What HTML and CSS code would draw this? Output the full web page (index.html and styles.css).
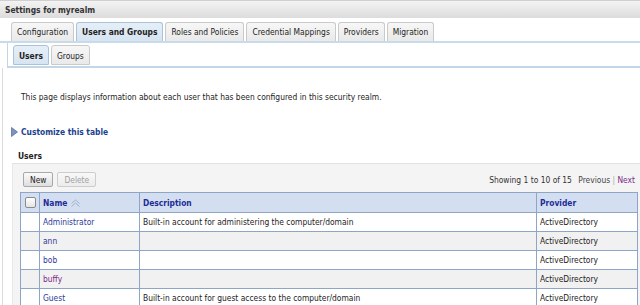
FILE: index.html
```html
<!DOCTYPE html>
<html lang="en">
<head>
    <meta charset="UTF-8">
    <title>Settings for myrealm</title>
    <link rel="stylesheet" href="styles.css">
</head>
<body>
    <div class="titlebar">Settings for myrealm</div>
    <div class="tabs">
        <a class="tab">Configuration</a>
        <a class="tab active">Users and Groups</a>
        <a class="tab">Roles and Policies</a>
        <a class="tab">Credential Mappings</a>
        <a class="tab">Providers</a>
        <a class="tab">Migration</a>
    </div>
    <div class="tabpanel">
        <div class="subtabs">
            <a class="subtab active">Users</a>
            <a class="subtab">Groups</a>
        </div>
    </div>
    <div class="page">
        <p class="intro">This page displays information about each user that has been configured in this security realm.</p>
        <a class="customize">
            <svg width="7" height="10" viewBox="0 0 7 10"><path d="M0.5 0.5 L6.5 5 L0.5 9.5 Z" fill="#7d93bd" stroke="#5b74a8" stroke-width="0.8"/></svg>
            Customize this table
        </a>
        <h3 class="section">Users</h3>
        <div class="tablebox">
            <div class="toolbar">
                <button class="btn">New</button>
                <button class="btn" disabled>Delete</button>
                <div class="paging">Showing 1 to 10 of 15 <span class="prev">Previous</span> <span class="sep">|</span> <a class="visited">Next</a></div>
            </div>
            <table class="users">
                <thead>
                    <tr>
                        <th class="chk"><span class="checkbox"></span></th>
                        <th class="name">Name <svg width="11" height="8" viewBox="0 0 11 8"><path d="M1.5 4.5 L5.5 1 L9.5 4.5 M1.5 7.5 L5.5 4 L9.5 7.5" fill="none" stroke="#9fb0cc" stroke-width="1"/></svg></th>
                        <th class="desc">Description</th>
                        <th class="prov">Provider</th>
                    </tr>
                </thead>
                <tbody>
                    <tr><td></td><td><a>Administrator</a></td><td>Built-in account for administering the computer/domain</td><td>ActiveDirectory</td></tr>
                    <tr class="alt"><td></td><td><a>ann</a></td><td></td><td>ActiveDirectory</td></tr>
                    <tr><td></td><td><a>bob</a></td><td></td><td>ActiveDirectory</td></tr>
                    <tr class="alt"><td></td><td><a class="visited">buffy</a></td><td></td><td>ActiveDirectory</td></tr>
                    <tr><td></td><td><a>Guest</a></td><td>Built-in account for guest access to the computer/domain</td><td>ActiveDirectory</td></tr>
                </tbody>
            </table>
        </div>
    </div>
</body>
</html>
```

FILE: styles.css
```css
body {
    margin: 0;
    font-family: "DejaVu Sans Condensed", "DejaVu Sans", sans-serif;
    font-size: 8.4px;
    color: #222;
    background: #fff;
    overflow: hidden;
}
a {
    color: #2b3a98;
    text-decoration: none;
}
a.visited {
    color: #7a2b86;
}
.titlebar {
    height: 18px;
    line-height: 18px;
    padding-left: 5px;
    font-weight: bold;
    color: #333;
    background: linear-gradient(#f3f3f3, #dcdcdc);
    border-top: 1px solid #cfcfcf;
    box-sizing: border-box;
}
.tabs {
    display: flex;
    gap: 2px;
    margin-top: 4px;
    padding-left: 11px;
    height: 19px;
    border-bottom: 2px solid #c8dbea;
}
.tab {
    color: #222;
    height: 19px;
    line-height: 19px;
    padding: 0 5px;
    background: linear-gradient(#f7f7f7, #e9e9e9);
    border: 1px solid #cacaca;
    border-bottom: none;
    border-radius: 3px 3px 0 0;
    box-sizing: border-box;
}
.tab.active {
    font-weight: bold;
    background: linear-gradient(#e6eff8, #d6e4f1);
    border-color: #a9c3dc;
}
.tabpanel {
    margin-left: 7px;
    border-left: 1px solid #c2d6e7;
    border-bottom: 2px solid #c2d6e7;
    height: 23px;
}
.subtabs {
    display: flex;
    gap: 2px;
    padding: 2px 0 0 5px;
}
.subtab {
    color: #222;
    height: 20px;
    line-height: 20px;
    padding: 0 5px;
    background: linear-gradient(#f7f7f7, #e9e9e9);
    border: 1px solid #cacaca;
    border-radius: 3px 3px 0 0;
    box-sizing: border-box;
}
.subtab.active {
    font-weight: bold;
    background: linear-gradient(#e6eff8, #d6e4f1);
    border-color: #a9c3dc;
}
.page {
    margin-left: 2px;
    border-left: 1px solid #dcdcdc;
    padding-top: 24px;
}
.intro {
    margin: 0 0 0 18px;
    line-height: 10px;
}
.customize {
    display: flex;
    align-items: center;
    gap: 3px;
    margin: 25px 0 0 8px;
    font-weight: bold;
    color: #213f8f;
    line-height: 10px;
}
.section {
    margin: 14px 0 0 15px;
    font-size: 8.4px;
    font-weight: bold;
    line-height: 10px;
}
.tablebox {
    margin: 2px 0 0 9px;
    padding: 8px 4px 0 7px;
    background: #f4f4f4;
    border-top: 1px solid #e2e2e2;
    border-left: 1px solid #e8e8e8;
}
.toolbar {
    display: flex;
    align-items: center;
    gap: 4px;
    height: 15px;
    padding-left: 3px;
    margin-bottom: 5px;
}
.btn {
    font-family: inherit;
    font-size: 8.4px;
    height: 15px;
    padding: 0 6px;
    color: #222;
    background: linear-gradient(#fbfbfb, #dedede);
    border: 1px solid #a8a8a8;
    border-radius: 2px;
}
.btn:disabled {
    color: #a0a0a0;
    border-color: #cdcdcd;
    background: linear-gradient(#f8f8f8, #ececec);
}
.paging {
    margin-left: auto;
    margin-right: 1px;
    color: #333;
}
.paging .prev {
    margin-left: 4px;
    color: #444;
}
.paging .sep {
    color: #aaa;
}
.users {
    width: 618px;
    border-collapse: collapse;
    background: #fff;
}
.users th, .users td {
    border: 1px solid #8da5c6;
    text-align: left;
    padding: 0 3px;
    height: 19px;
    box-sizing: border-box;
}
.users th {
    height: 20px;
    background: #d3dff0;
    color: #1e2c96;
    font-weight: bold;
}
.users tr.alt td {
    background: #f1f1f1;
}
.users .chk {
    width: 19px;
    padding: 0;
    text-align: center;
}
.users .name {
    width: 100px;
}
.users .desc {
    width: 397px;
}
.checkbox {
    display: inline-block;
    width: 9px;
    height: 9px;
    vertical-align: middle;
    border: 1px solid #8a8a8a;
    border-radius: 2px;
    background: linear-gradient(#fff, #e4e4e4);
}
.name svg {
    vertical-align: -1px;
}
```
